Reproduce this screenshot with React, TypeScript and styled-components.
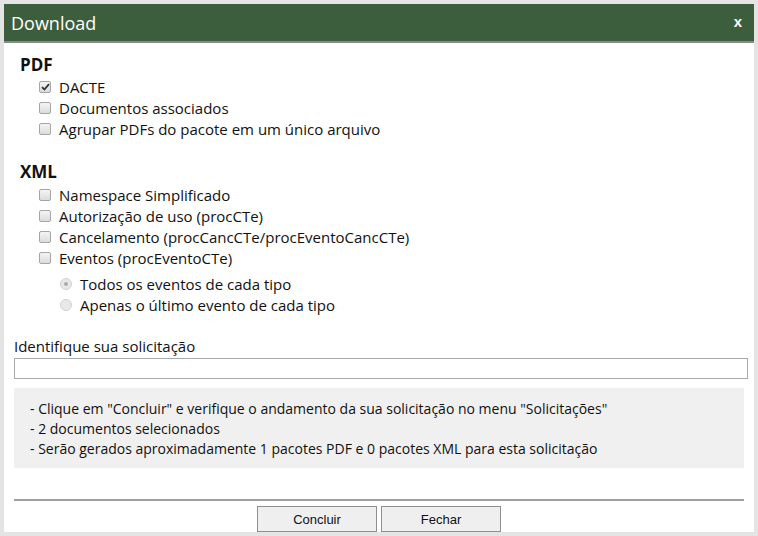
import React, { useState } from "react";
import styled, { createGlobalStyle } from "styled-components";

const GlobalStyle = createGlobalStyle`
    html, body {
        margin: 0;
        padding: 0;
        background: #e4e4e4;
    }
    * {
        box-sizing: border-box;
    }
`;

const StyledDialog = styled.div`
    width: 758px;
    height: 536px;
    border: 4px solid #e4e4e4;
    background: #ffffff;
    display: flex;
    flex-direction: column;
    font-family: "Open Sans", "Noto Sans", sans-serif;
    color: #111;
`;

const StyledHeader = styled.div`
    height: 39px;
    background: #3c5e3c;
    border-bottom: 2px solid #8a8a8a;
    display: flex;
    align-items: center;
    justify-content: space-between;
    padding: 0 12px 0 7px;
    color: #fff;
`;

const StyledTitle = styled.div`
    font-size: 18px;
`;

const StyledClose = styled.a`
    font-family: "Liberation Sans", Arial, sans-serif;
    font-weight: bold;
    font-size: 15px;
    color: #fff;
    text-decoration: none;
    margin-top: -2px;
`;

const StyledBody = styled.div`
    flex: 1;
    display: flex;
    flex-direction: column;
    padding: 10px 6px 0 10px;
`;

const StyledSection = styled.div<{ gap?: number }>`
    padding-left: 6px;
    margin-bottom: ${(p) => p.gap ?? 0}px;
`;

const StyledHeading = styled.div<{ after?: number }>`
    font-weight: bold;
    font-size: 17px;
    line-height: 23px;
    margin-bottom: ${(p) => p.after ?? 0}px;
`;

const StyledOption = styled.label<{ indent?: number }>`
    display: flex;
    align-items: center;
    gap: 8px;
    height: 21px;
    font-size: 15px;
    padding-left: ${(p) => p.indent ?? 19}px;
`;

const StyledCheck = styled.span<{ checked?: boolean }>`
    width: 12px;
    height: 12px;
    border: 1px solid #a6a6a6;
    border-radius: 2px;
    background: linear-gradient(#f4f4f4, #dcdcdc);
    display: flex;
    align-items: center;
    justify-content: center;
`;

const StyledRadio = styled.span<{ checked?: boolean }>`
    width: 12px;
    height: 12px;
    border-radius: 50%;
    border: 1px solid #d2d2d2;
    background: #e8e8e8;
    display: flex;
    align-items: center;
    justify-content: center;
    &::after {
        content: "";
        width: 4px;
        height: 4px;
        border-radius: 50%;
        background: ${(p) => (p.checked ? "#a9a9a9" : "transparent")};
    }
`;

const StyledRadioGroup = styled.div`
    margin-top: 5px;
`;

const StyledLabel = styled.div`
    font-size: 15px;
    margin-top: 22px;
    line-height: 19px;
`;

const StyledInput = styled.input`
    width: 100%;
    height: 21px;
    border: 1px solid #a9a9a9;
    margin: 2px 0 0 0;
    outline: none;
    font-family: inherit;
`;

const StyledInfo = styled.div`
    margin-top: 9px;
    margin-right: 4px;
    background: #f0f0f0;
    padding: 11px 16px 9px 16px;
    font-size: 14px;
    line-height: 20px;
`;

const StyledFooter = styled.div`
    margin-top: auto;
    margin-right: 4px;
    border-top: 2px solid #a0a0a0;
    display: flex;
    justify-content: center;
    gap: 4px;
    padding: 5px 0 0 0;
`;

const StyledButton = styled.button`
    width: 120px;
    height: 26px;
    background: #efefef;
    border: 1px solid #8f8f8f;
    font-family: "Liberation Sans", Arial, sans-serif;
    font-size: 13px;
    color: #111;
    padding: 0;
`;

const CheckMark = () => (
    <svg width="9" height="8" viewBox="0 0 9 8">
        <path d="M1 4.2 L3.4 6.5 L8 1.2" fill="none" stroke="#333" strokeWidth="1.8" />
    </svg>
);

const Option = ({ label, checked }: { label: string; checked?: boolean }) => (
    <StyledOption>
        <StyledCheck checked={checked}>{checked && <CheckMark />}</StyledCheck>
        {label}
    </StyledOption>
);

const RadioOption = ({ label, checked }: { label: string; checked?: boolean }) => (
    <StyledOption indent={40}>
        <StyledRadio checked={checked} />
        {label}
    </StyledOption>
);

export default function App() {
    const [nome, setNome] = useState("");

    return (
        <>
            <GlobalStyle />
            <StyledDialog>
                <StyledHeader>
                    <StyledTitle>Download</StyledTitle>
                    <StyledClose href="#">x</StyledClose>
                </StyledHeader>
                <StyledBody>
                    <StyledSection gap={21}>
                        <StyledHeading>PDF</StyledHeading>
                        <Option label="DACTE" checked />
                        <Option label="Documentos associados" />
                        <Option label="Agrupar PDFs do pacote em um único arquivo" />
                    </StyledSection>
                    <StyledSection>
                        <StyledHeading after={1}>XML</StyledHeading>
                        <Option label="Namespace Simplificado" />
                        <Option label="Autorização de uso (procCTe)" />
                        <Option label="Cancelamento (procCancCTe/procEventoCancCTe)" />
                        <Option label="Eventos (procEventoCTe)" />
                        <StyledRadioGroup>
                            <RadioOption label="Todos os eventos de cada tipo" checked />
                            <RadioOption label="Apenas o último evento de cada tipo" />
                        </StyledRadioGroup>
                    </StyledSection>
                    <StyledLabel>Identifique sua solicitação</StyledLabel>
                    <StyledInput value={nome} onChange={(e) => setNome(e.target.value)} />
                    <StyledInfo>
                        <div>- Clique em "Concluir" e verifique o andamento da sua solicitação no menu "Solicitações"</div>
                        <div>- 2 documentos selecionados</div>
                        <div>- Serão gerados aproximadamente 1 pacotes PDF e 0 pacotes XML para esta solicitação</div>
                    </StyledInfo>
                    <StyledFooter>
                        <StyledButton>Concluir</StyledButton>
                        <StyledButton>Fechar</StyledButton>
                    </StyledFooter>
                </StyledBody>
            </StyledDialog>
        </>
    );
}
